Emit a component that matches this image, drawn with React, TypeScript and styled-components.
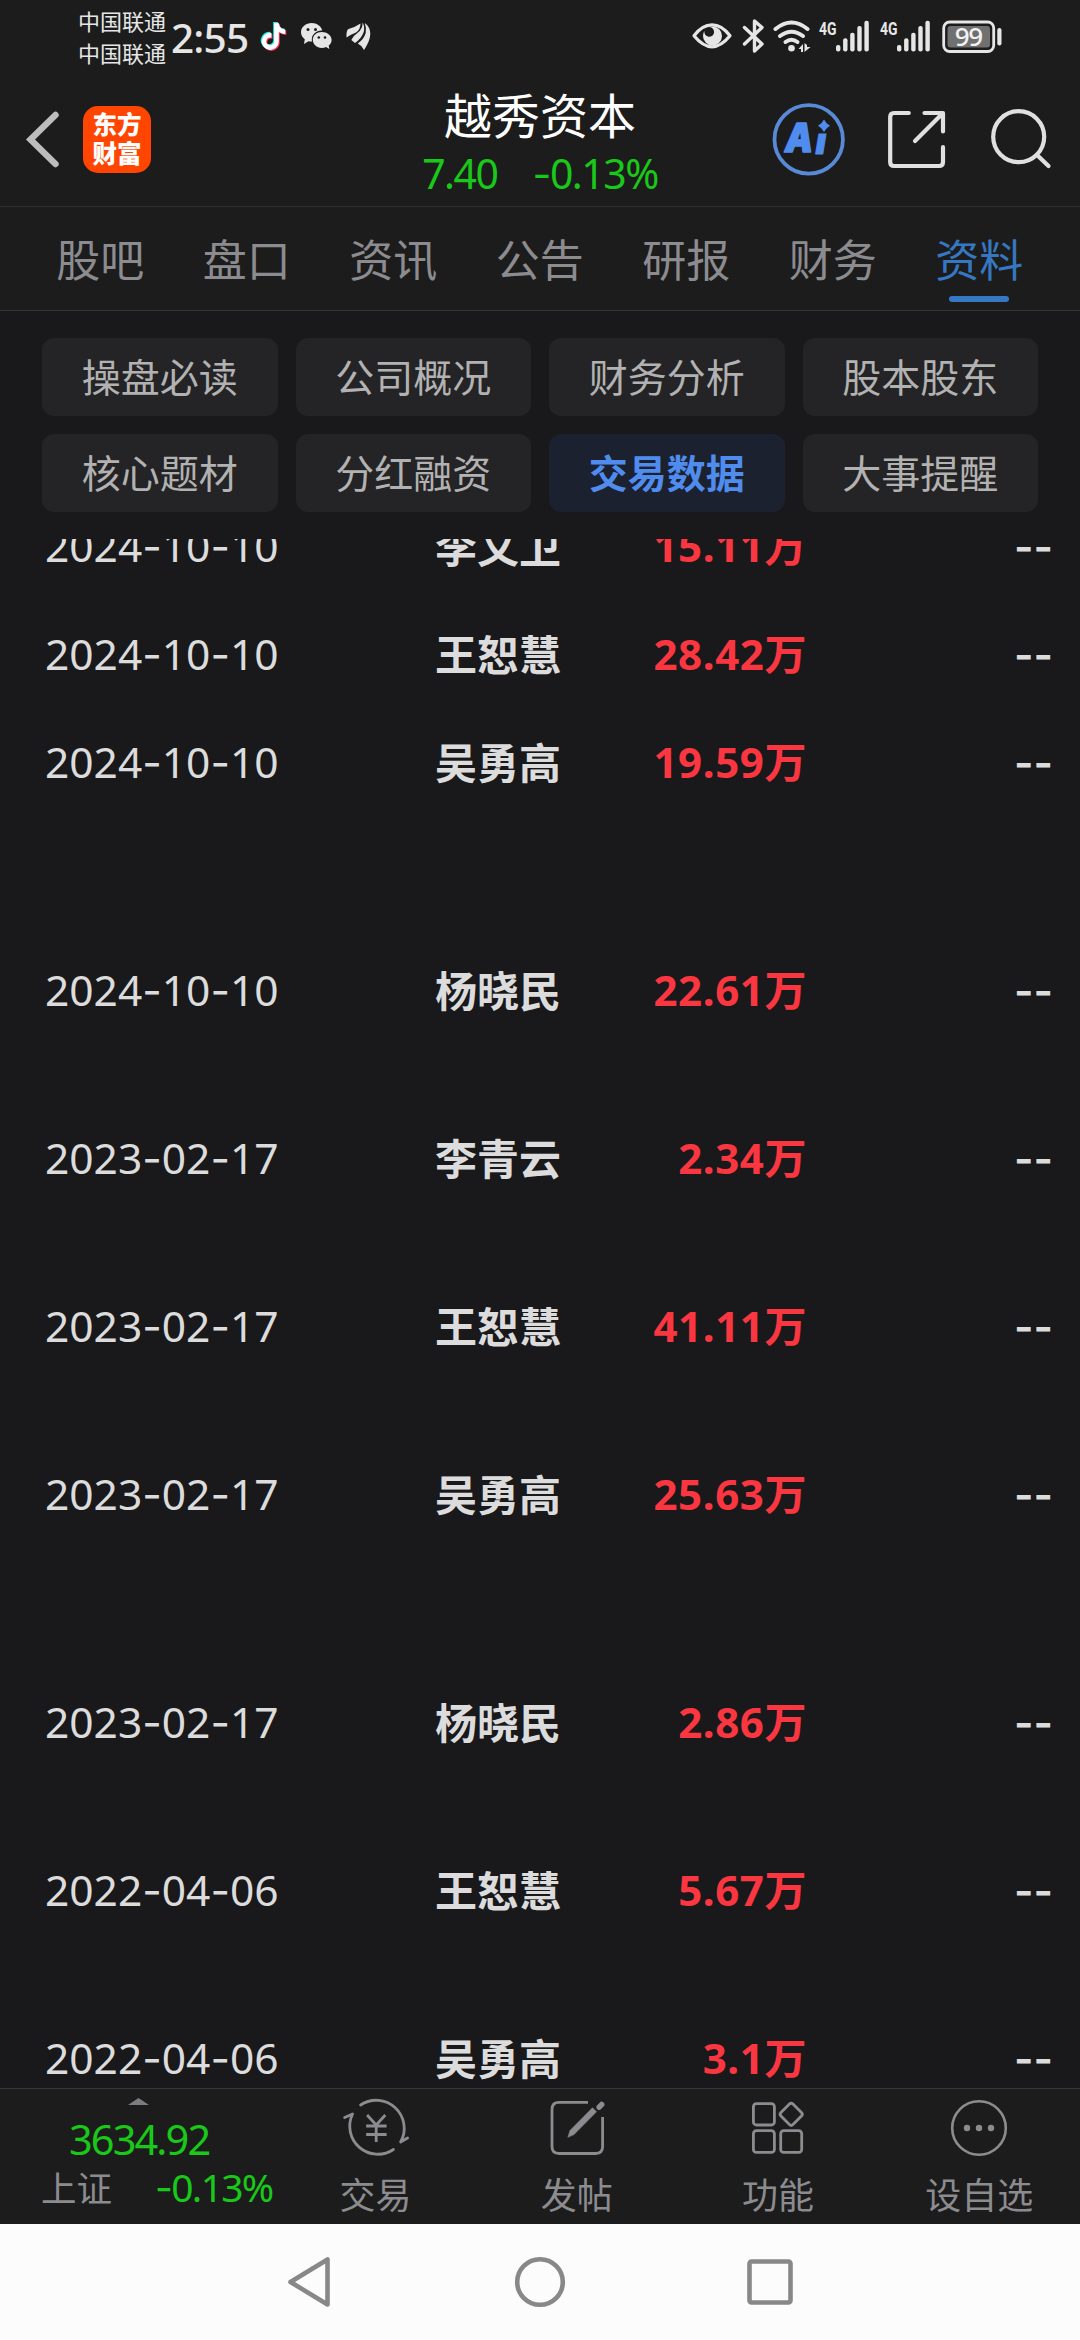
import React from "react";
import styled, { createGlobalStyle } from "styled-components";
import { FaTiktok } from "react-icons/fa";

const LATIN = `"Noto Sans", "Noto Sans CJK SC", sans-serif`;
const HAN = `"Noto Sans CJK SC", "Noto Sans", sans-serif`;
const GREEN = "#19c819";
const MUTED = "#8c8c90";

const Global = createGlobalStyle`
  * { box-sizing: border-box; }
  html, body { margin: 0; padding: 0; background: #19191b; }
`;

const Screen = styled.div`
  display: flex;
  flex-direction: column;
  width: 1080px;
  height: 2340px;
  overflow: hidden;
  background: #19191b;
  font-family: ${HAN};
  white-space: nowrap;
  svg { display: block; flex: none; }
`;

/* ---------- status bar ---------- */

const StatusBar = styled.div`
  flex: none;
  display: flex;
  justify-content: space-between;
  height: 75px;
  padding: 0 78px;
  background: #1c1c1c;
  color: #e6e6e6;
`;

const StatusLeft = styled.div`
  display: flex;
  align-items: flex-start;
`;

const Carriers = styled.div`
  display: flex;
  flex-direction: column;
  width: 93px;
  padding-top: 4px;
  font-size: 22px;
  line-height: 32px;
`;

const Clock = styled.div`
  width: 90px;
  padding-top: 17px;
  font-family: ${LATIN};
  font-size: 40.5px;
  font-weight: 500;
  line-height: 42px;
  letter-spacing: -0.8px;
`;

const NoteStack = styled.div`
  position: relative;
  width: 24px;
  height: 29px;
  margin: 22px 16px 0 0;
`;

const NoteLayer = styled(FaTiktok)<{ $x: number; $y: number; $tone: string }>`
  position: absolute;
  width: 25px;
  height: 27px;
  left: ${(p) => p.$x}px;
  top: ${(p) => p.$y}px;
  color: ${(p) => p.$tone};
`;

const ChatIcon = styled.svg`
  margin: 20px 14px 0 0;
`;

const WingIcon = styled.svg`
  margin-top: 21px;
`;

const StatusIcons = styled.svg`
  margin-top: 15px;
`;

/* ---------- header ---------- */

const Header = styled.header`
  flex: none;
  display: grid;
  grid-template-columns: 360px 360px 360px;
  height: 132px;
  background: #1c1c1c;
  border-bottom: 1px solid #303030;
`;

const HeaderLeft = styled.div`
  display: flex;
  padding: 31px 0 0 24px;
`;

const Logo = styled.div`
  display: flex;
  flex-direction: column;
  justify-content: center;
  align-items: center;
  width: 68px;
  height: 67px;
  margin-left: 21px;
  border-radius: 15px;
  background: #ff4500;
  color: #fff;
  font-size: 24.5px;
  font-weight: 900;
  line-height: 29px;
  padding-bottom: 3px;
`;

const HeaderTitle = styled.div`
  display: flex;
  flex-direction: column;
  align-items: center;
`;

const StockName = styled.div`
  margin-top: 9px;
  color: #fff;
  font-size: 48px;
  line-height: 58px;
`;

const Quote = styled.div`
  display: flex;
  gap: 35px;
  margin-top: 9px;
  color: ${GREEN};
  font-family: ${LATIN};
  font-size: 41px;
  line-height: 44px;
  letter-spacing: -1.5px;
`;

const HeaderActions = styled.div`
  display: flex;
  padding: 20px 0 0 40px;
`;

/* ---------- tabs ---------- */

const Tabs = styled.nav`
  flex: none;
  display: grid;
  grid-template-columns: repeat(7, 146.5px);
  height: 104px;
  padding-left: 27px;
  background: #1c1c1c;
  border-bottom: 1px solid #353535;
`;

const Tab = styled.div<{ $active?: boolean }>`
  display: flex;
  flex-direction: column;
  align-items: center;
  color: ${(p) => (p.$active ? "#3677c1" : MUTED)};
  font-size: 44px;
  line-height: 60px;
  padding-top: 21px;
  &::after {
    content: "";
    width: 60px;
    height: 6px;
    margin-top: 8px;
    border-radius: 3px;
    background: ${(p) => (p.$active ? "#3677c1" : "transparent")};
  }
`;

const SubTabs = styled.div`
  flex: none;
  display: grid;
  grid-template-columns: repeat(4, 1fr);
  grid-auto-rows: 78px;
  gap: 18px;
  height: 228px;
  padding: 27px 42px 0;
`;

const SubTab = styled.div<{ $active?: boolean }>`
  display: flex;
  align-items: center;
  justify-content: center;
  padding-bottom: 5px;
  border-radius: 12px;
  background: ${(p) => (p.$active ? "#1c212f" : "#242426")};
  color: ${(p) => (p.$active ? "#508cee" : "#b2b2b2")};
  font-size: 39px;
  font-weight: ${(p) => (p.$active ? 700 : 400)};
  line-height: 56px;
`;

/* ---------- records ---------- */

const List = styled.main`
  flex: none;
  display: flex;
  flex-direction: column;
  height: 1549px;
  overflow: hidden;
`;

const ListBody = styled.div`
  flex: none;
  margin-top: -46px;
`;

const Record = styled.div<{ $space: number }>`
  display: grid;
  grid-template-columns: 390px 126px 246px 246px;
  align-items: center;
  height: 108px;
  margin-top: ${(p) => p.$space}px;
  padding-left: 45px;
  color: #dcdcdc;
  font-size: 42px;
  line-height: 60px;
`;

const DateText = styled.div`
  padding-bottom: 2px;
  font-family: ${LATIN};
  font-size: 42.5px;
`;

const Hyphen = styled.span`
  font-family: Inter, sans-serif;
`;

const Holder = styled.div`
  padding-bottom: 5px;
  font-weight: 700;
`;

const Amount = styled.div`
  padding-bottom: 3px;
  color: #fa3741;
  font-family: ${LATIN};
  font-weight: 700;
  text-align: right;
  letter-spacing: 0.6px;
`;

const Empty = styled.div`
  font-family: Inter, sans-serif;
  font-weight: 600;
  text-align: right;
`;

/* ---------- bottom bar ---------- */

const BottomBar = styled.footer`
  flex: none;
  display: grid;
  grid-template-columns: 275px repeat(4, 201.25px);
  height: 136px;
  background: #1c1c1c;
  border-top: 1px solid #353535;
`;

const IndexPanel = styled.div`
  display: flex;
  flex-direction: column;
  padding-top: 9px;
  svg { margin-left: 128px; }
`;

const IndexValue = styled.div`
  margin: 10px 0 1px 69px;
  color: ${GREEN};
  font-family: ${LATIN};
  font-size: 41.5px;
  line-height: 48px;
  letter-spacing: -1.9px;
`;

const IndexRow = styled.div`
  display: flex;
  align-items: baseline;
  margin-left: 41px;
  color: ${MUTED};
  font-size: 35.5px;
  line-height: 46px;
`;

const IndexChange = styled.span`
  margin-left: 43px;
  color: ${GREEN};
  font-family: ${LATIN};
  font-size: 39px;
  letter-spacing: -1.7px;
`;

const Action = styled.div`
  display: flex;
  flex-direction: column;
  align-items: center;
  padding-top: 3px;
  color: ${MUTED};
  font-size: 36px;
  line-height: 50px;
  svg { margin-bottom: 4px; }
`;

/* ---------- system navigation ---------- */

const SystemNav = styled.div`
  flex: none;
  display: grid;
  grid-template-columns: repeat(3, 230px);
  justify-content: center;
  justify-items: center;
  align-items: center;
  height: 116px;
  background: #fcfcfc;
`;

const signalTops = [40, 33.3, 27.7, 21, 15.7];

const Signal = ({ x }: { x: number }) => (
  <g>
    <text
      x={x}
      y={20}
      fill="#e6e6e6"
      fontFamily="Roboto, sans-serif"
      fontSize="19"
      fontWeight="700"
      textLength="17.5"
      lengthAdjust="spacingAndGlyphs"
    >
      4G
    </text>
    {signalTops.map((top, i) => (
      <rect key={i} x={x + 17 + i * 7.1} y={top - 10} width={4.4} height={46.6 - top} rx={2} fill="#e6e6e6" />
    ))}
  </g>
);

const StatusRight = () => (
  <StatusIcons width="312" height="40" viewBox="0 0 312 40">
    <path d="M4 20.8Q12 9.8 22 9.8T40 20.8Q31 31.8 22 31.8T4 20.8Z" fill="none" stroke="#e6e6e6" strokeWidth="3.2" strokeLinejoin="round" />
    <path d="M22.5 11.5A9.5 9.5 0 1 1 13 20.8Q13 18 14.4 16A4.9 4.9 0 1 0 19.4 12Q20.6 11.5 22.5 11.5Z" fill="#e6e6e6" />
    <path d="M54.5 12.5L72 29L64.5 36V6L72 12.5L54.5 29" fill="none" stroke="#e6e6e6" strokeWidth="3.4" strokeLinecap="round" strokeLinejoin="round" />
    <g fill="none" stroke="#e6e6e6" strokeWidth="4" strokeLinecap="round">
      <path d="M85.5 14Q101.5 1 117.5 14" />
      <path d="M90 21Q101.500 12.500 113 21" />
      <path d="M95.500 27Q101.500 22.500 107.500 27" />
    </g>
    <circle cx="101.500" cy="33.300" r="3.300" fill="#e6e6e6" />
    <path d="M108.500 34L113 29V37H111V34ZM114.500 28V37L120.500 32H117V30Z" fill="#e6e6e6" />
    <Signal x={129} />
    <Signal x={190} />
    <rect x="253.700" y="7" width="50" height="29.500" rx="6" fill="none" stroke="#e6e6e6" strokeWidth="2.800" />
    <rect x="257.500" y="11" width="42.500" height="21.500" rx="3" fill="#707070" />
    <rect x="307.300" y="13" width="4.200" height="17.500" rx="2" fill="#e6e6e6" />
    <text x="278.200" y="31" textAnchor="middle" fill="#f2f2f2" fontFamily="Noto Sans, sans-serif" fontSize="26" fontWeight="500" letterSpacing="-1.4">
      99
    </text>
  </StatusIcons>
);

const WeChat = () => (
  <ChatIcon width="31" height="32" viewBox="0 0 31 32">
    <path fill="#e6e6e6" d="M10.700 3C4.800 3 0 7 0 12.200C0 15 1.500 17.500 3.800 19.200L3 24L7.500 21.200C8.800 21.500 10 21.500 11 21.400C9.500 14 16.500 9.800 21.300 10.500C20.200 6.200 16 3 10.700 3Z" />
    <path fill="#e6e6e6" d="M20.800 12C15.700 12 11.800 15.300 11.800 19.800S15.700 28 20.800 28C22.400 28 23.800 27.700 25 27L28.300 29L27.700 25.500C29.600 24.200 30.600 22.200 30.600 20C30.600 15.400 26 12 20.800 12Z" />
    <g fill="#1c1c1c">
      <circle cx="7" cy="9.500" r="1.500" />
      <circle cx="14.500" cy="9.500" r="1.500" />
      <circle cx="17.800" cy="17.500" r="1.300" />
      <circle cx="24" cy="17.500" r="1.300" />
    </g>
  </ChatIcon>
);

const Wing = () => (
  <WingIcon width="25" height="30" viewBox="0 0 25 30">
    <g fill="#e6e6e6">
      <path d="M14.500 2.500Q9.500 6 2.500 8Q0 9.500 .5 16.500Q6 13 10 11.500Q14.500 8.500 14.500 2.500Z" />
      <path d="M16.700 1.500Q16.500 8 12 11.500Q8 14 5.300 19L9 22Q15.500 17.500 17.700 11Q19 6 16.700 1.500Z" />
      <path d="M18.800 2Q24 5.500 24.300 13Q24 20 18 29Q16 24.500 11.800 22.500Q18 18 19.700 12Q20.500 6.500 18.800 2Z" />
    </g>
  </WingIcon>
);

const icon = { fill: "none", strokeLinecap: "round" as const, strokeLinejoin: "round" as const };

const Back = () => (
  <svg width="38" height="67" viewBox="24 106 38 67">
    <path d="M55.500 115L30.500 139.500L55.500 164" {...icon} stroke="#bdbdbd" strokeWidth="6.400" strokeLinejoin="miter" />
  </svg>
);

const HeaderIcons = () => (
  <svg width="300" height="84" viewBox="760 95 300 84">
    <circle cx="808.700" cy="139.400" r="34.200" fill="none" stroke="#588ad8" strokeWidth="3.800" />
    <g fill="#508cee" stroke="#508cee" strokeLinejoin="round" fontFamily="Inter, sans-serif" fontWeight="900" fontStyle="italic">
      <text x="785" y="152" fontSize="40" strokeWidth="1.500" textLength="28" lengthAdjust="spacingAndGlyphs">A</text>
      <text x="815.500" y="154" fontSize="36" strokeWidth="1">ı</text>
    </g>
    <path d="M824 119.500Q826 123.700 830 125.700Q826 127.700 824 132Q822 127.700 818 125.700Q822 123.700 824 119.500Z" fill="#508cee" />
    <g {...icon} stroke="#e0e0e0" strokeWidth="4.200">
      <path d="M908.800 113H894Q890.200 113 890.200 117V162Q890.200 166 894 166H939Q943 166 943 162V147.200" />
      <path d="M924.500 113H943V131.500M941.500 114.500L915 141" />
      <circle cx="1018.700" cy="136.700" r="25.500" />
      <path d="M1037 155L1048.500 166" />
    </g>
  </svg>
);

const TradeIcon = () => (
  <svg width="72" height="72" viewBox="339.400 2092 72 72" {...icon} stroke={MUTED} strokeWidth="2.800">
    <path d="M360 2105A28 28 0 0 1 400 2142L407 2138" />
    <path d="M392.800 2149.500A28 28 0 0 1 352 2114L344 2117.500" />
    <path d="M366.500 2115L375.600 2125L384.700 2115M375.600 2125V2142M365.500 2126H386M365.500 2134.500H386" strokeLinecap="butt" />
  </svg>
);

const PostIcon = () => (
  <svg width="72" height="72" viewBox="541 2092 72 72" {...icon} stroke={MUTED} strokeWidth="2.800">
    <path d="M588 2102.400H559Q552 2102.400 552 2109.400V2146.500Q552 2153.500 559 2153.500H595.600Q602.600 2153.500 602.600 2146.500V2117" strokeLinecap="butt" />
    <path d="M568 2137L570 2130.500L592.500 2107.800L596.500 2111.800L574 2134.500Z" fill={MUTED} strokeWidth=".6" />
    <path d="M599.200 2107.200L601.700 2104.500" strokeWidth="5.500" />
  </svg>
);

const FeatureIcon = () => (
  <svg width="72" height="72" viewBox="742.500 2092 72 72" {...icon} stroke={MUTED} strokeWidth="2.800">
    <rect x="753.900" y="2103.700" width="21" height="21.300" rx="3" />
    <rect x="753.900" y="2130.700" width="21" height="21.700" rx="3" />
    <rect x="781.200" y="2130.700" width="21" height="21.700" rx="3" />
    <rect x="783.200" y="2105.800" width="17" height="17" rx="2.500" transform="rotate(45 791.700 2114.300)" />
  </svg>
);

const MoreIcon = () => (
  <svg width="72" height="72" viewBox="943 2092 72 72">
    <circle cx="979" cy="2128" r="26.800" fill="none" stroke={MUTED} strokeWidth="2.600" />
    {[967, 979, 991].map((x) => (
      <circle key={x} cx={x} cy="2128" r="3.200" fill={MUTED} />
    ))}
  </svg>
);

const tabs = ["股吧", "盘口", "资讯", "公告", "研报", "财务", "资料"];
const subTabs = ["操盘必读", "公司概况", "财务分析", "股本股东", "核心题材", "分红融资", "交易数据", "大事提醒"];

const records = [
  { date: "2024-10-10", name: "李文卫", amount: "15.11万", space: 0 },
  { date: "2024-10-10", name: "王恕慧", amount: "28.42万", space: 0 },
  { date: "2024-10-10", name: "吴勇高", amount: "19.59万", space: 0 },
  { date: "2024-10-10", name: "杨晓民", amount: "22.61万", space: 120 },
  { date: "2023-02-17", name: "李青云", amount: "2.34万", space: 60 },
  { date: "2023-02-17", name: "王恕慧", amount: "41.11万", space: 60 },
  { date: "2023-02-17", name: "吴勇高", amount: "25.63万", space: 60 },
  { date: "2023-02-17", name: "杨晓民", amount: "2.86万", space: 120 },
  { date: "2022-04-06", name: "王恕慧", amount: "5.67万", space: 60 },
  { date: "2022-04-06", name: "吴勇高", amount: "3.1万", space: 60 },
];

const actions = [
  { label: "交易", Icon: TradeIcon },
  { label: "发帖", Icon: PostIcon },
  { label: "功能", Icon: FeatureIcon },
  { label: "设自选", Icon: MoreIcon },
];

/* Sets hyphens in a face whose dash is wider than the digit face's own. */
const Dashed = ({ value }: { value: string }) => (
  <>
    {value.split(/(-)/).map((part, i) => (part === "-" ? <Hyphen key={i}>-</Hyphen> : part))}
  </>
);

export default function App() {
  return (
    <Screen>
      <Global />
      <StatusBar>
        <StatusLeft>
          <Carriers>
            <span>中国联通</span>
            <span>中国联通</span>
          </Carriers>
          <Clock>2:55</Clock>
          <NoteStack>
            <NoteLayer $x={-1} $y={0} $tone="#25f4ee" />
            <NoteLayer $x={1} $y={2} $tone="#fe2c55" />
            <NoteLayer $x={0} $y={1} $tone="#ffffff" />
          </NoteStack>
          <WeChat />
          <Wing />
        </StatusLeft>
        <StatusRight />
      </StatusBar>

      <Header>
        <HeaderLeft>
          <Back />
          <Logo>
            <span>东方</span>
            <span>财富</span>
          </Logo>
        </HeaderLeft>
        <HeaderTitle>
          <StockName>越秀资本</StockName>
          <Quote>
            <span>7.40</span>
            <span>
              <Dashed value="-0.13%" />
            </span>
          </Quote>
        </HeaderTitle>
        <HeaderActions>
          <HeaderIcons />
        </HeaderActions>
      </Header>

      <Tabs>
        {tabs.map((t) => (
          <Tab key={t} $active={t === "资料"}>
            {t}
          </Tab>
        ))}
      </Tabs>

      <SubTabs>
        {subTabs.map((t) => (
          <SubTab key={t} $active={t === "交易数据"}>
            {t}
          </SubTab>
        ))}
      </SubTabs>

      <List>
        <ListBody>
          {records.map((r, i) => (
            <Record key={i} $space={r.space}>
              <DateText>
                <Dashed value={r.date} />
              </DateText>
              <Holder>{r.name}</Holder>
              <Amount>{r.amount}</Amount>
              <Empty>--</Empty>
            </Record>
          ))}
        </ListBody>
      </List>

      <BottomBar>
        <IndexPanel>
          <svg width="21" height="7" viewBox="0 0 21 7">
            <path d="M0 7L10.500 0L21 7Z" fill="#7c7c81" />
          </svg>
          <IndexValue>3634.92</IndexValue>
          <IndexRow>
            上证
            <IndexChange>
              <Dashed value="-0.13%" />
            </IndexChange>
          </IndexRow>
        </IndexPanel>
        {actions.map(({ label, Icon }) => (
          <Action key={label}>
            <Icon />
            {label}
          </Action>
        ))}
      </BottomBar>

      <SystemNav>
        <svg width="46" height="52" viewBox="0 0 46 52" {...icon} stroke="#888888" strokeWidth="4.600">
          <path d="M3.500 26L40.500 3.500V48.500Z" />
        </svg>
        <svg width="52" height="52" viewBox="0 0 52 52">
          <circle cx="26" cy="26" r="22.800" fill="none" stroke="#888888" strokeWidth="4.600" />
        </svg>
        <svg width="46" height="46" viewBox="0 0 46 46">
          <rect x="2.500" y="2.500" width="41" height="41" rx="2" fill="none" stroke="#888888" strokeWidth="4.600" />
        </svg>
      </SystemNav>
    </Screen>
  );
}
